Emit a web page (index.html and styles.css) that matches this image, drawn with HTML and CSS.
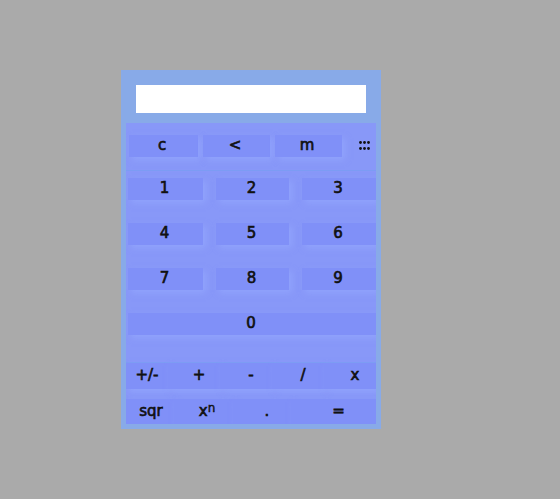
FILE: index.html
```html
<!DOCTYPE html>
<html>
<head>
<meta charset="utf-8">
<link rel="stylesheet" href="styles.css">
</head>
<body>
<div class="calc">
  <div class="display"></div>
  <div class="keypad">
    <div class="row-top">
      <div class="key">c</div>
      <div class="key">&lt;</div>
      <div class="key">m</div>
      <div class="grip">
        <svg width="12" height="10" viewBox="0 0 12 10" aria-hidden="true">
          <circle cx="1.5" cy="1.5" r="1.4" fill="#111"/>
          <circle cx="5.5" cy="1.5" r="1.4" fill="#111"/>
          <circle cx="9.5" cy="1.5" r="1.4" fill="#111"/>
          <circle cx="1.5" cy="7.5" r="1.4" fill="#111"/>
          <circle cx="5.5" cy="7.5" r="1.4" fill="#111"/>
          <circle cx="9.5" cy="7.5" r="1.4" fill="#111"/>
        </svg>
      </div>
    </div>
    <div class="digits">
      <div class="key">1</div><div class="key">2</div><div class="key">3</div>
      <div class="key">4</div><div class="key">5</div><div class="key">6</div>
      <div class="key">7</div><div class="key">8</div><div class="key">9</div>
      <div class="key zero">0</div>
    </div>
    <div class="ops">
      <div class="key first">+/-</div>
      <div class="key">+</div>
      <div class="key">-</div>
      <div class="key">/</div>
      <div class="key">x</div>
    </div>
    <div class="bottom">
      <div class="key first">sqr</div>
      <div class="key pow">x<sup>n</sup></div>
      <div class="key">.</div>
      <div class="key">=</div>
    </div>
  </div>
</div>
</body>
</html>
```
FILE: styles.css
```css
html, body {
  margin: 0;
  padding: 0;
  background: #aaaaaa;
  height: 100%;
}
body {
  font-family: "DejaVu Sans", Verdana, sans-serif;
  font-size: 15px;
  font-weight: normal;
  -webkit-text-stroke: 0.65px #111;
  color: #111;
}
.calc {
  margin: 70px 0 0 121px;
  width: 260px;
  box-sizing: border-box;
  padding: 15px 5px 5px 5px;
  background: #88aae8;
}
.display {
  height: 28px;
  margin: 0 10px 10px 10px;
  background: #ffffff;
}
.keypad {
  background: #8898f8;
  display: flex;
  flex-direction: column;
  overflow: hidden;
}
.key {
  display: flex;
  align-items: center;
  justify-content: center;
  box-sizing: border-box;
  height: 22px;
  padding-bottom: 2px;
  background: #8090f8;
  box-shadow: 3px 3px 6px rgba(150, 170, 255, 0.6);
}
.row-top {
  display: grid;
  grid-template-columns: 69px 67px 67px 1fr;
  column-gap: 5px;
  padding: 12px 0 13px 3px;
  border-bottom: 1px solid #7c9cf4;
}
.row-top .key {
  padding-right: 3px;
}
.grip {
  display: flex;
  align-items: center;
  justify-content: center;
  height: 22px;
  padding-left: 6px;
}
.grip svg {
  display: block;
}
.digits {
  display: grid;
  grid-template-columns: 75px 73px 1fr;
  grid-auto-rows: 22px;
  align-content: start;
  column-gap: 13px;
  row-gap: 23px;
  padding: 7px 0 0 2px;
  height: 192px;
  box-sizing: border-box;
  border-bottom: 1px solid #7c9cf4;
}
.digits .key {
  padding-right: 2px;
}
.zero {
  grid-column: 1 / 4;
}
.ops {
  display: grid;
  grid-template-columns: 42px 52px 52px 52px 1fr;
}
.ops .key {
  height: 26px;
  padding-left: 10px;
}
.ops .key.first {
  padding-left: 0;
}
.bottom {
  display: grid;
  grid-template-columns: 48px 59px 58px 1fr;
  margin-top: 10px;
}
.bottom .key {
  height: 25px;
  padding-left: 10px;
}
.bottom .key.first {
  padding-left: 2px;
}
.bottom .key.pow {
  padding-left: 7px;
}
sup {
  font-size: 12px;
  -webkit-text-stroke: 0.4px #111;
  line-height: 0;
  position: relative;
  top: -3px;
}
```
